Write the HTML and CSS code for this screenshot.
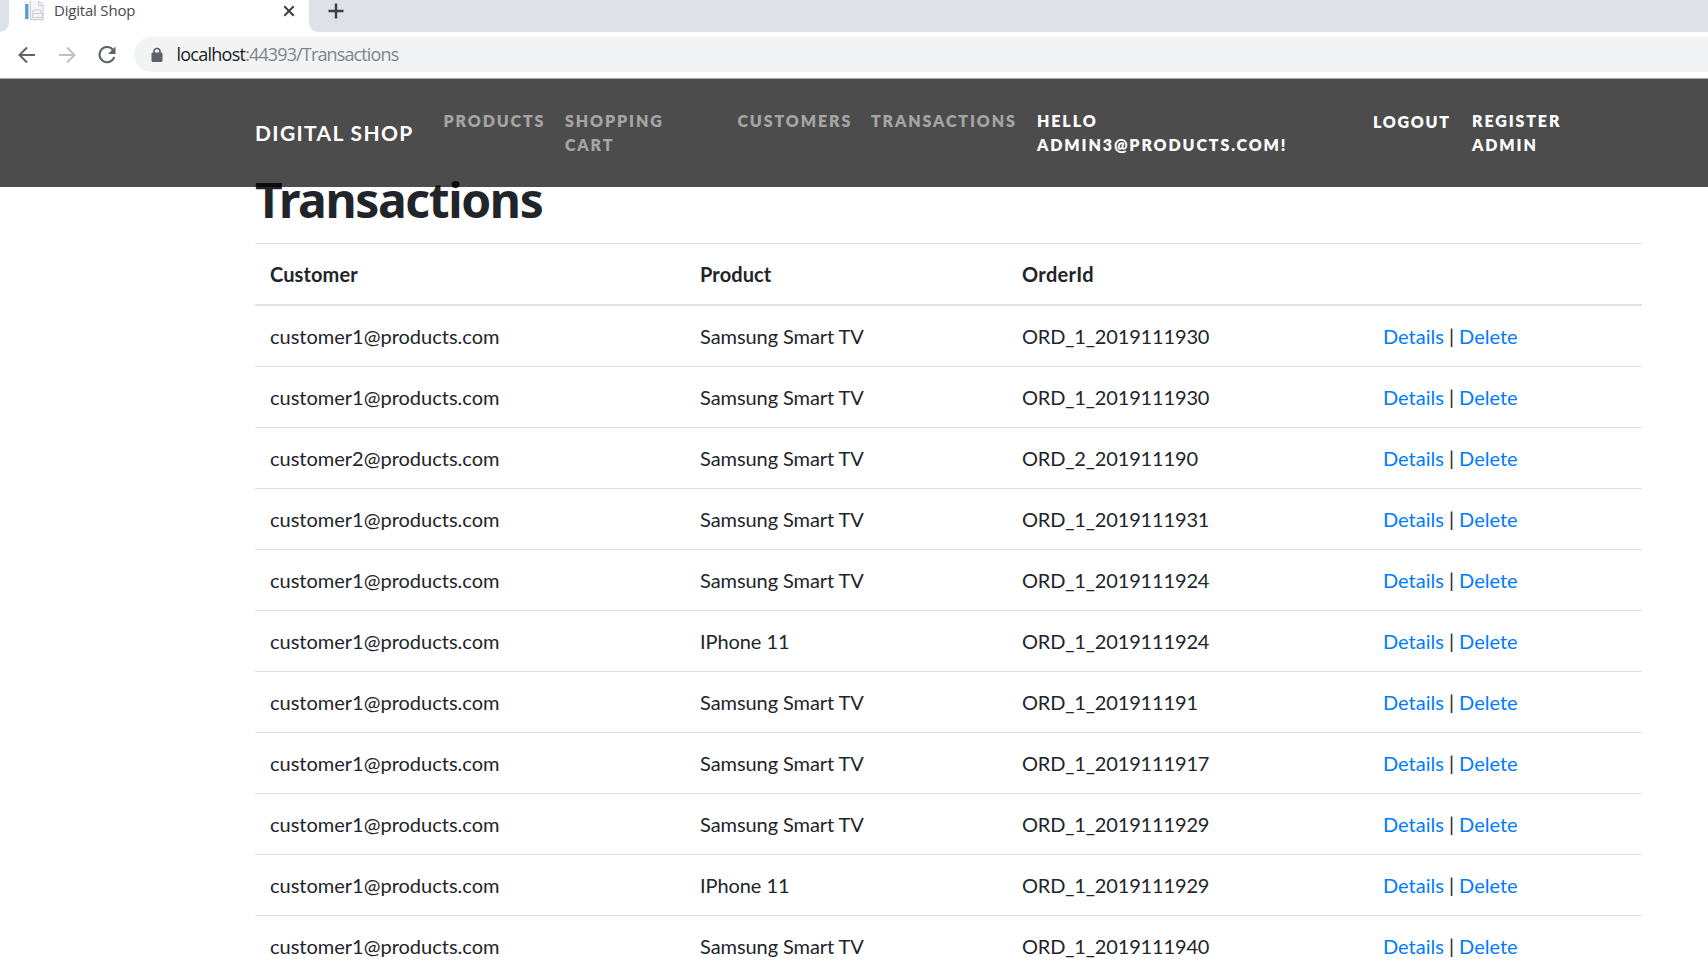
FILE: index.html
```html
<!DOCTYPE html>
<html lang="en">
<head>
<meta charset="utf-8">
<title>Digital Shop</title>
<link rel="stylesheet" href="styles.css">
</head>
<body>
<header class="browser">
  <div class="tabstrip">
    <div class="tab-prev"></div>
    <div class="tab">
      <svg class="favicon" width="20" height="20" viewBox="0 0 20 20"><rect x="0" y="0" width="20" height="20" fill="#f3f5f7"/><rect x="1.200" y="3" width="3.200" height="15" fill="#5b9bcb"/><path d="M6.500 0v18.500h12.500V4.500L14.500 0M14.500 0v4.500h4.500M9 12v-3h8v3M8.500 12.500h10v4h-10z" fill="none" stroke="#c9ced4"/></svg>
      <span class="tab-title">Digital Shop</span>
      <svg class="tab-close" width="12" height="12" viewBox="0 0 12 12"><path d="M1.300 1.300l9.400 9.400M10.700 1.300l-9.400 9.400" stroke="#3c4043" stroke-width="2"/></svg>
    </div>
    <div class="tab-rest">
      <svg width="16" height="16" viewBox="0 0 16 16"><path d="M8 .5v15M.5 8h15" stroke="#3c4043" stroke-width="2.500"/></svg>
    </div>
  </div>
  <div class="toolbar">
    <svg class="tool" width="18" height="18" viewBox="0 0 18 18"><path d="M17 9H2M9 1.500L1.500 9L9 16.500" fill="none" stroke="#5f6368" stroke-width="2"/></svg>
    <svg class="tool" width="18" height="18" viewBox="0 0 18 18"><path d="M1 9h15M9 1.500L16.500 9L9 16.500" fill="none" stroke="#bdc1c6" stroke-width="2"/></svg>
    <svg class="tool" width="18" height="18" viewBox="0 0 18 18"><path d="M15.300 4.200A7.600 7.600 0 1 0 16.300 11" fill="none" stroke="#5f6368" stroke-width="2.100"/><path d="M17.500 .5v7.500H10z" fill="#5f6368"/></svg>
    <div class="address">
      <svg width="12" height="16" viewBox="0 0 12 16"><path d="M3 7V4.500a3 3 0 0 1 6 0V7" fill="none" stroke="#5f6368" stroke-width="1.700"/><rect x=".5" y="5.500" width="11" height="9.500" rx="1.300" fill="#5f6368"/></svg>
      <span class="url"><span class="host">localhost</span>:44393/Transactions</span>
    </div>
  </div>
</header>
<nav class="navbar">
  <a class="brand">Digital Shop</a>
  <a class="link products">Products</a>
  <a class="link cart">Shopping Cart</a>
  <a class="link customers">Customers</a>
  <a class="link trans">Transactions</a>
  <a class="link white hello">Hello admin3@products.com!</a>
  <a class="link white logout">Logout</a>
  <a class="link white register">Register Admin</a>
</nav>
<main class="content">
  <h1 class="title">Transactions</h1>
  <table class="table">
    <colgroup><col class="c1"><col class="c2"><col class="c3"><col class="c4"></colgroup>
    <thead><tr><th>Customer</th><th>Product</th><th>OrderId</th><th></th></tr></thead>
    <tbody>
      <tr><td>customer1@products.com</td><td>Samsung Smart TV</td><td>ORD_1_2019111930</td><td><a>Details</a> | <a>Delete</a></td></tr>
      <tr><td>customer1@products.com</td><td>Samsung Smart TV</td><td>ORD_1_2019111930</td><td><a>Details</a> | <a>Delete</a></td></tr>
      <tr><td>customer2@products.com</td><td>Samsung Smart TV</td><td>ORD_2_201911190</td><td><a>Details</a> | <a>Delete</a></td></tr>
      <tr><td>customer1@products.com</td><td>Samsung Smart TV</td><td>ORD_1_2019111931</td><td><a>Details</a> | <a>Delete</a></td></tr>
      <tr><td>customer1@products.com</td><td>Samsung Smart TV</td><td>ORD_1_2019111924</td><td><a>Details</a> | <a>Delete</a></td></tr>
      <tr><td>customer1@products.com</td><td>IPhone 11</td><td>ORD_1_2019111924</td><td><a>Details</a> | <a>Delete</a></td></tr>
      <tr><td>customer1@products.com</td><td>Samsung Smart TV</td><td>ORD_1_201911191</td><td><a>Details</a> | <a>Delete</a></td></tr>
      <tr><td>customer1@products.com</td><td>Samsung Smart TV</td><td>ORD_1_2019111917</td><td><a>Details</a> | <a>Delete</a></td></tr>
      <tr><td>customer1@products.com</td><td>Samsung Smart TV</td><td>ORD_1_2019111929</td><td><a>Details</a> | <a>Delete</a></td></tr>
      <tr><td>customer1@products.com</td><td>IPhone 11</td><td>ORD_1_2019111929</td><td><a>Details</a> | <a>Delete</a></td></tr>
      <tr><td>customer1@products.com</td><td>Samsung Smart TV</td><td>ORD_1_2019111940</td><td><a>Details</a> | <a>Delete</a></td></tr>
    </tbody>
  </table>
</main>
</body>
</html>
```
FILE: styles.css
```css
* { box-sizing: border-box; }
html, body { margin: 0; height: 976px; overflow: hidden; background: #fff; }
body { font: 20px/30px Lato, sans-serif; color: #212529; }
.browser { height: 79px; background: #fff; border-bottom: 1px solid #a9a9a9; font-family: "Open Sans", sans-serif; }
.tabstrip { height: 32px; display: flex; }
.tab-prev { width: 9px; background: #dee1e6; border-bottom-right-radius: 9px; }
.tab { width: 300px; height: 32px; display: flex; align-items: flex-start; padding-left: 15px; }
.favicon { margin-top: 1px; }
.tab-title { margin-left: 10px; width: 229px; font-size: 15px; line-height: 20px; color: #45494d; letter-spacing: -.2px; }
.tab-close { margin-top: 5px; flex: none; }
.tab-rest { flex: 1; background: #dee1e6; border-bottom-left-radius: 9px; padding: 3px 0 0 19px; }
.tab-rest svg { display: block; }
.toolbar { height: 45px; display: flex; align-items: center; padding-left: 17.5px; }
.tool { margin-right: 22px; flex: none; }
.address { flex: 1; height: 35px; margin-left: -3.500px; background: #f1f3f4; border-radius: 18px 0 0 18px; display: flex; align-items: center; padding-left: 16.5px; gap: 14px; }
.url { font-size: 18px; line-height: 24px; padding-bottom: 1px; color: #80868b; letter-spacing: -.87px; }
.host { color: #202124; letter-spacing: -.75px; }
.navbar { position: relative; z-index: 2; height: 108px; background: rgba(0,0,0,.7); display: flex; align-items: flex-start; padding: 30px 0 0 255px; text-transform: uppercase; font-weight: 800; }
.brand { width: 188.5px; margin-top: 9px; color: #fff; font-size: 21px; font-weight: 700; letter-spacing: 1.35px; white-space: nowrap; }
.link { font-size: 16px; line-height: 24px; letter-spacing: 1.88px; color: rgba(255,255,255,.5); }
.white { color: #fff; }
.products { width: 121.5px; }
.cart { width: 172.500px; padding-right: 50px; }
.customers { width: 133.500px; }
.trans { width: 166px; }
.hello { width: 336px; padding-right: 60px; }
.logout { width: 99px; margin-top: 1px; letter-spacing: 1.7px; }
.register { width: 110px; }
.content { padding-left: 255px; }
.title { margin: -17px 0 13px; height: 60px; font: 700 48px/60px "Noto Sans", sans-serif; letter-spacing: -1.37px; }
.table { width: 1387px; table-layout: fixed; border-collapse: collapse; }
.c1 { width: 430px; }
.c2 { width: 322px; }
.c3 { width: 361px; }
.c4 { width: 274px; }
.table th, .table td { border-top: 1px solid #dee2e6; padding: 15px; text-align: left; height: 61px; }
.table th { font-weight: 700; border-bottom: 2px solid #dee2e6; letter-spacing: .12px; }
.table th:nth-child(3) { letter-spacing: .35px; }
.table td:nth-child(2) { letter-spacing: -.07px; }
.table td:nth-child(3) { letter-spacing: -.15px; }
.table a { color: #007bff; }
```
